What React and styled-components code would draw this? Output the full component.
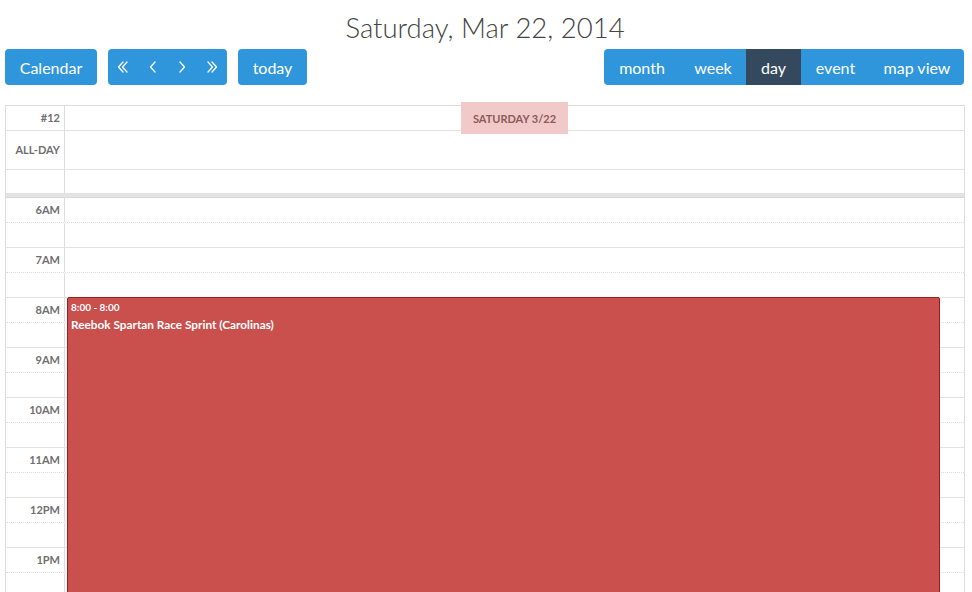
import styled, { createGlobalStyle } from "styled-components";

const GlobalStyle = createGlobalStyle`
  html, body {
    margin: 0;
    padding: 0;
    background: #fff;
    overflow: hidden;
  }
  body {
    font-family: Lato, "Open Sans", sans-serif;
    color: #2c3e50;
  }
`;

const Page = styled.div`
  width: 960px;
  padding: 0 5px;
`;

const Title = styled.h2`
  margin: 0;
  height: 49px;
  display: flex;
  align-items: center;
  justify-content: center;
  padding-top: 5px;
  box-sizing: border-box;
  font-size: 27.5px;
  font-weight: 300;
  color: #444;
`;

const Toolbar = styled.div`
  display: flex;
  align-items: center;
  justify-content: space-between;
  height: 36px;
  margin-bottom: 20px;
`;

const ToolGroup = styled.div`
  display: flex;
  gap: 11px;
`;

const ButtonGroup = styled.div`
  display: flex;
  border-radius: 4px;
  overflow: hidden;
  margin-right: ${(p) => p.$end ? 1 : 0}px;
`;

const Button = styled.button`
  height: 36px;
  border: 0;
  margin: 0;
  padding: 0;
  width: ${(p) => p.$width}px;
  background: ${(p) => (p.$active ? "#34495e" : "#2f96dc")};
  color: #fff;
  font-family: Lato, sans-serif;
  font-size: 16px;
  border-radius: ${(p) => (p.$single ? "4px" : "0")};
  display: flex;
  align-items: center;
  justify-content: center;
  cursor: pointer;
`;

const Grid = styled.div`
  border: 1px solid #ddd;
  border-bottom: 0;
`;

const Row = styled.div`
  display: grid;
  grid-template-columns: 59px 1fr;
  height: ${(p) => p.$h}px;
  border-bottom: 1px ${(p) => (p.$dotted ? "dotted #ddd" : "solid #e2e2e2")};
  box-sizing: border-box;
`;

const Axis = styled.div`
  border-right: 1px solid #ddd;
  font-size: 11px;
  font-weight: 700;
  color: #6f6f6f;
  text-align: right;
  padding: ${(p) => p.$top ?? 6}px 4px 0 0;
  box-sizing: border-box;
  text-transform: uppercase;
`;

const HeadCell = styled.div`
  display: flex;
  justify-content: center;
`;

const TodayLabel = styled.div`
  margin-top: -4px;
  height: 32px;
  width: 107px;
  background: #f1c9c8;
  color: #8b5b5a;
  font-size: 11px;
  font-weight: 700;
  display: flex;
  align-items: center;
  justify-content: center;
`;

const Divider = styled.div`
  height: 4px;
  background: #e4e4e4;
  border-bottom: 1px solid #d8d8d8;
  box-sizing: border-box;
`;

const Slots = styled.div`
  position: relative;
`;

const Event = styled.div`
  position: absolute;
  left: 61px;
  width: 873px;
  top: ${(p) => p.$top}px;
  height: ${(p) => p.$h}px;
  background: #c9504d;
  border: 1px solid #a31b1b;
  box-sizing: border-box;
  border-radius: 2px 2px 0 0;
  color: #fff;
  padding: 1px 3px;
`;

const EventTime = styled.div`
  font-size: 10px;
  font-weight: 700;
  line-height: 14px;
  margin-top: 1px;
`;

const EventTitle = styled.div`
  font-size: 11.8px;
  font-weight: 700;
  line-height: 16px;
  margin-top: 3px;
`;

const Chevron = ({ dir, double }) => (
  <svg width="14" height="14" viewBox="0 0 14 14" fill="none" stroke="#fff" strokeWidth="1.3" strokeLinecap="round" strokeLinejoin="round">
    {double ? (
      dir === "left" ? (
        <>
          <path d="M7 2 L2.5 7 L7 12" />
          <path d="M11 2 L6.5 7 L11 12" />
        </>
      ) : (
        <>
          <path d="M3 2 L7.5 7 L3 12" />
          <path d="M7 2 L11.5 7 L7 12" />
        </>
      )
    ) : dir === "left" ? (
      <path d="M9 2 L4.5 7 L9 12" />
    ) : (
      <path d="M5 2 L9.5 7 L5 12" />
    )}
  </svg>
);

const hours = ["6am", "7am", "8am", "9am", "10am", "11am", "12pm", "1pm"];

export default function App() {
  return (
    <>
      <GlobalStyle />
      <Page>
        <Title>Saturday, Mar 22, 2014</Title>
        <Toolbar>
          <ToolGroup>
            <Button $single $width={92}>Calendar</Button>
            <ButtonGroup>
              <Button $width={30}><Chevron dir="left" double /></Button>
              <Button $width={29}><Chevron dir="left" /></Button>
              <Button $width={30}><Chevron dir="right" /></Button>
              <Button $width={30}><Chevron dir="right" double /></Button>
            </ButtonGroup>
            <Button $single $width={69}>today</Button>
          </ToolGroup>
          <ButtonGroup $end>
            <Button $width={76}>month</Button>
            <Button $width={66}>week</Button>
            <Button $width={55} $active>day</Button>
            <Button $width={69}>event</Button>
            <Button $width={94}>map view</Button>
          </ButtonGroup>
        </Toolbar>
        <Grid>
          <Row $h={25}>
            <Axis $top={5}>#12</Axis>
            <HeadCell>
              <TodayLabel>SATURDAY 3/22</TodayLabel>
            </HeadCell>
          </Row>
          <Row $h={39}>
            <Axis $top={12}>all-day</Axis>
            <div />
          </Row>
          <Row $h={24}>
            <Axis />
            <div />
          </Row>
          <Divider />
          <Slots>
            {hours.map((h) => (
              <div key={h}>
                <Row $h={25} $dotted>
                  <Axis $top={5}>{h}</Axis>
                  <div />
                </Row>
                <Row $h={25}>
                  <Axis />
                  <div />
                </Row>
              </div>
            ))}
            <Event $top={99} $h={301}>
              <EventTime>8:00 - 8:00</EventTime>
              <EventTitle>Reebok Spartan Race Sprint (Carolinas)</EventTitle>
            </Event>
          </Slots>
        </Grid>
      </Page>
    </>
  );
}
